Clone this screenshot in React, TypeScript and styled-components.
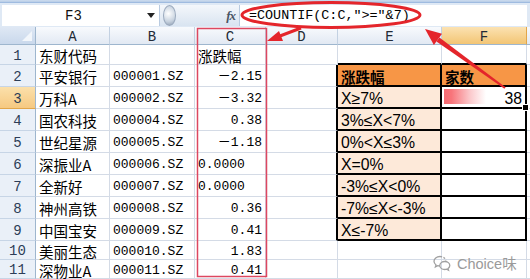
import React from "react";
import styled, { createGlobalStyle } from "styled-components";

const Global = createGlobalStyle`
  html, body { margin: 0; padding: 0; background: #ffffff; }
  body { width: 530px; height: 279px; overflow: hidden; }
`;

const MONO = `"Liberation Mono", "Noto Sans CJK SC", monospace`;
const CJK = `"Noto Sans CJK SC", "Liberation Sans", sans-serif`;
const SANS = `"Liberation Sans", "Noto Sans CJK SC", sans-serif`;

const Page = styled.div`
  position: relative;
  width: 530px;
  height: 279px;
  overflow: hidden;
  display: flex;
  flex-direction: column;
  background: #fff;
`;

const RibbonEdge = styled.div`
  height: 3px;
  background: linear-gradient(#cddcef, #b7cce6);
  border-bottom: 1px solid #9fbbe0;
`;

const FormulaBar = styled.div`
  height: 24px;
  display: flex;
  padding: 2px 3px 1px 2px;
  box-sizing: border-box;
  background: #dfe9f5;
`;

const NameBox = styled.div`
  width: 157px;
  display: flex;
  align-items: center;
  background: #fff;
  font: 14px ${MONO};
  color: #111;
`;

const NameText = styled.div`
  flex: 1;
  text-align: center;
  padding-left: 2px;
`;

const DropArrow = styled.div`
  width: 16px;
  display: flex;
  justify-content: center;
  &::before {
    content: "";
    border-left: 4px solid transparent;
    border-right: 4px solid transparent;
    border-top: 5px solid #222;
  }
`;

const FxPill = styled.div`
  width: 80px;
  display: flex;
  align-items: center;
  justify-content: space-between;
  padding: 0 4px 0 3px;
  box-sizing: border-box;
  background: linear-gradient(#f4f7fb, #d9e4f1);
  border-left: 1px solid #b9cbe1;
`;

const Knob = styled.div`
  width: 11px;
  height: 19px;
  border-radius: 50%;
  background: radial-gradient(circle at 40% 40%, #ffffff, #c7d2df 60%, #8d9cb0);
  border: 1px solid #9aa9bd;
`;

const Fx = styled.span`
  font: italic bold 13px "Liberation Serif", serif;
  color: #4a5566;
  letter-spacing: -1px;
`;

const FormulaInput = styled.div`
  flex: 1;
  display: flex;
  align-items: center;
  padding-left: 9px;
  background: #fff;
  border-left: 1px solid #b9cbe1;
  font: 13.4px ${MONO};
  color: #000;
  white-space: pre;
`;

const Grid = styled.div`
  display: grid;
  grid-template-columns: 36px 74px 85px 71px 72px 104px 85px 1fr;
  grid-template-rows: 18px 20px repeat(8, 22px) 19px 19px;
`;

const ColHead = styled.div<{ $active?: boolean }>`
  display: flex;
  align-items: center;
  justify-content: center;
  padding-top: 2px;
  box-sizing: border-box;
  background: ${(p) =>
    p.$active
      ? "linear-gradient(#fbe2b2, #f3c574)"
      : "linear-gradient(#f8fafd, #e2e9f3)"};
  border-right: 1px solid ${(p) => (p.$active ? "#e2a64a" : "#c3d1e2")};
  border-bottom: 1px solid #9eb6ce;
  font: 14px ${MONO};
  color: #222a36;
`;

const Corner = styled.div`
  position: relative;
  box-sizing: border-box;
  background: linear-gradient(#dfe8f4, #c9d8ec);
  border-right: 1px solid #9eb6ce;
  border-bottom: 1px solid #9eb6ce;
  &::after {
    content: "";
    position: absolute;
    right: 3px;
    bottom: 3px;
    width: 10px;
    height: 10px;
    background: #f2f6fb;
    clip-path: polygon(100% 0, 100% 100%, 0 100%);
  }
`;

const RowHead = styled.div<{ $active?: boolean }>`
  display: flex;
  align-items: center;
  justify-content: center;
  padding-top: 2px;
  box-sizing: border-box;
  background: ${(p) =>
    p.$active ? "linear-gradient(#fbe0ab, #f6c981)" : "#eaf0f8"};
  border-right: 1px solid #9eb6ce;
  border-bottom: 1px solid ${(p) => (p.$active ? "#e2a64a" : "#c7d5e6")};
  font: 14px ${MONO};
  color: #2c3d57;
`;

type Font = "cjk" | "mono" | "sans";

const Cell = styled.div<{
  $right?: boolean;
  $fill?: string;
  $thickR?: boolean;
  $thickB?: boolean;
  $font?: Font;
  $bold?: boolean;
}>`
  position: relative;
  display: flex;
  align-items: center;
  justify-content: ${(p) => (p.$right ? "flex-end" : "flex-start")};
  padding: 2px 3px 0 3px;
  box-sizing: border-box;
  min-width: 0;
  background: ${(p) => p.$fill ?? "#fff"};
  border-right: ${(p) => (p.$thickR ? "2px solid #000" : "1px solid #d4dbe6")};
  border-bottom: ${(p) => (p.$thickB ? "2px solid #000" : "1px solid #d4dbe6")};
  white-space: nowrap;
  color: #000;
  font-family: ${(p) => (p.$font === "cjk" ? CJK : p.$font === "sans" ? SANS : MONO)};
  font-size: ${(p) => (p.$font === "cjk" ? "14.5px" : p.$font === "sans" ? "15.8px" : "13px")};
  font-weight: ${(p) => (p.$bold ? 700 : 400)};
  line-height: 17px;
`;

const DataBar = styled.div`
  position: absolute;
  left: 2px;
  top: 2px;
  bottom: 3px;
  background: linear-gradient(to right, #f56a72 0%, #f8757b 18%, #fbc6c9 60%, #ffffff 100%);
`;

const BarValue = styled.span`
  position: relative;
`;

const FillHandle = styled.div`
  position: absolute;
  right: -4px;
  bottom: -4px;
  width: 5px;
  height: 5px;
  background: #000;
  border: 1px solid #fff;
  z-index: 2;
`;

const Overlay = styled.svg`
  position: absolute;
  left: 0;
  top: 0;
  pointer-events: none;
`;

const Watermark = styled.div`
  position: absolute;
  left: 432px;
  top: 252px;
  display: flex;
  align-items: center;
  gap: 5px;
  font: 14.5px ${SANS};
  color: #9a9a9a;
`;

type Row = { a: string; b: string; c: string; cText?: boolean };

const rows: Row[] = [
  { a: "东财代码", b: "", c: "涨跌幅", cText: true },
  { a: "平安银行", b: "000001.SZ", c: "－2.15" },
  { a: "万科A", b: "000002.SZ", c: "－3.32" },
  { a: "国农科技", b: "000004.SZ", c: "0.38" },
  { a: "世纪星源", b: "000005.SZ", c: "－1.18" },
  { a: "深振业A", b: "000006.SZ", c: "0.0000", cText: true },
  { a: "全新好", b: "000007.SZ", c: "0.0000", cText: true },
  { a: "神州高铁", b: "000008.SZ", c: "0.36" },
  { a: "中国宝安", b: "000009.SZ", c: "0.41" },
  { a: "美丽生态", b: "000010.SZ", c: "1.83" },
  { a: "深物业A", b: "000011.SZ", c: "0.41" },
];

const ranges = [
  "X≥7%",
  "3%≤X<7%",
  "0%<X≤3%",
  "X=0%",
  "-3%≤X<0%",
  "-7%≤X<-3%",
  "X≤-7%",
];

const PEACH = "#fde9d9";
const ORANGE = "#f79646";

function TableCells({ r }: { r: number }) {
  const inTable = r >= 2 && r <= 9;
  if (r === 1) {
    return (
      <>
        <Cell />
        <Cell $thickB />
        <Cell $thickB />
      </>
    );
  }
  if (!inTable) {
    return (
      <>
        <Cell />
        <Cell />
        <Cell />
      </>
    );
  }
  if (r === 2) {
    return (
      <>
        <Cell $thickR />
        <Cell $thickR $thickB $fill={ORANGE} $font="cjk" $bold>
          涨跌幅
        </Cell>
        <Cell $thickR $thickB $fill={ORANGE} $font="cjk" $bold>
          家数
        </Cell>
      </>
    );
  }
  return (
    <>
      <Cell $thickR />
      <Cell $thickR $thickB $fill={PEACH} $font="sans">
        {ranges[r - 3]}
      </Cell>
      {r === 3 ? (
        <Cell $thickR $thickB $right $font="sans">
          <DataBar style={{ width: `${(38 / 76) * 100}%` }} />
          <BarValue>38</BarValue>
          <FillHandle />
        </Cell>
      ) : (
        <Cell $thickR $thickB />
      )}
    </>
  );
}

function WeChatIcon() {
  return (
    <svg width="20" height="18" viewBox="0 0 20 18" fill="none" stroke="#a0a0a0" strokeWidth="1.3">
      <path d="M8 2.5c-3.5 0-6 2.2-6 4.8 0 1.5.8 2.7 2 3.6l-.6 2 2.3-1.2c.7.2 1.4.3 2.3.3" />
      <path d="M8 2.5c3 0 5.4 1.7 5.9 4" strokeDasharray="2 1.5" />
      <path d="M12.8 7.5c-2.8 0-5 1.8-5 4 0 2.3 2.2 4 5 4 .6 0 1.2-.1 1.8-.3l1.9 1-.5-1.6c1.1-.8 1.8-1.9 1.8-3.1 0-2.2-2.2-4-5-4z" />
    </svg>
  );
}

export default function App() {
  return (
    <Page>
      <Global />
      <RibbonEdge />
      <FormulaBar>
        <NameBox>
          <NameText>F3</NameText>
          <DropArrow />
        </NameBox>
        <FxPill>
          <Knob />
          <Fx>fx</Fx>
        </FxPill>
        <FormulaInput>=COUNTIF(C:C,"&gt;="&amp;7)</FormulaInput>
      </FormulaBar>
      <Grid>
        <Corner />
        <ColHead>A</ColHead>
        <ColHead>B</ColHead>
        <ColHead>C</ColHead>
        <ColHead>D</ColHead>
        <ColHead>E</ColHead>
        <ColHead $active>F</ColHead>
        <ColHead />
        {rows.map((row, i) => {
          const r = i + 1;
          return (
            <React.Fragment key={r}>
              <RowHead $active={r === 3}>{r}</RowHead>
              <Cell $font="cjk">{row.a}</Cell>
              <Cell>{row.b}</Cell>
              <Cell $right={!row.cText} $font={r === 1 ? "cjk" : "mono"}>
                {row.c}
              </Cell>
              <TableCells r={r} />
              <Cell />
            </React.Fragment>
          );
        })}
      </Grid>
      <Overlay width="530" height="279" viewBox="0 0 530 279">
        <rect x="197.5" y="28.5" width="69" height="248" fill="none" stroke="#dd4760" strokeWidth="1.5" />
        <ellipse cx="331" cy="15" rx="89" ry="12.5" fill="none" stroke="#e4252b" strokeWidth="3" />
        <line x1="301" y1="28" x2="276" y2="37.5" stroke="#e4252b" strokeWidth="3" />
        <polygon points="267,41 279,31 283,41" fill="#e4252b" />
        <polygon points="425,29 442,33.7 433.9,45 " fill="#e4252b" />
        <polygon points="439.4,37.4 436.5,41.4 504.4,88.8 505.6,87.2" fill="#e4252b" />
      </Overlay>
      <Watermark>
        <WeChatIcon />
        <span>Choice味</span>
      </Watermark>
    </Page>
  );
}
